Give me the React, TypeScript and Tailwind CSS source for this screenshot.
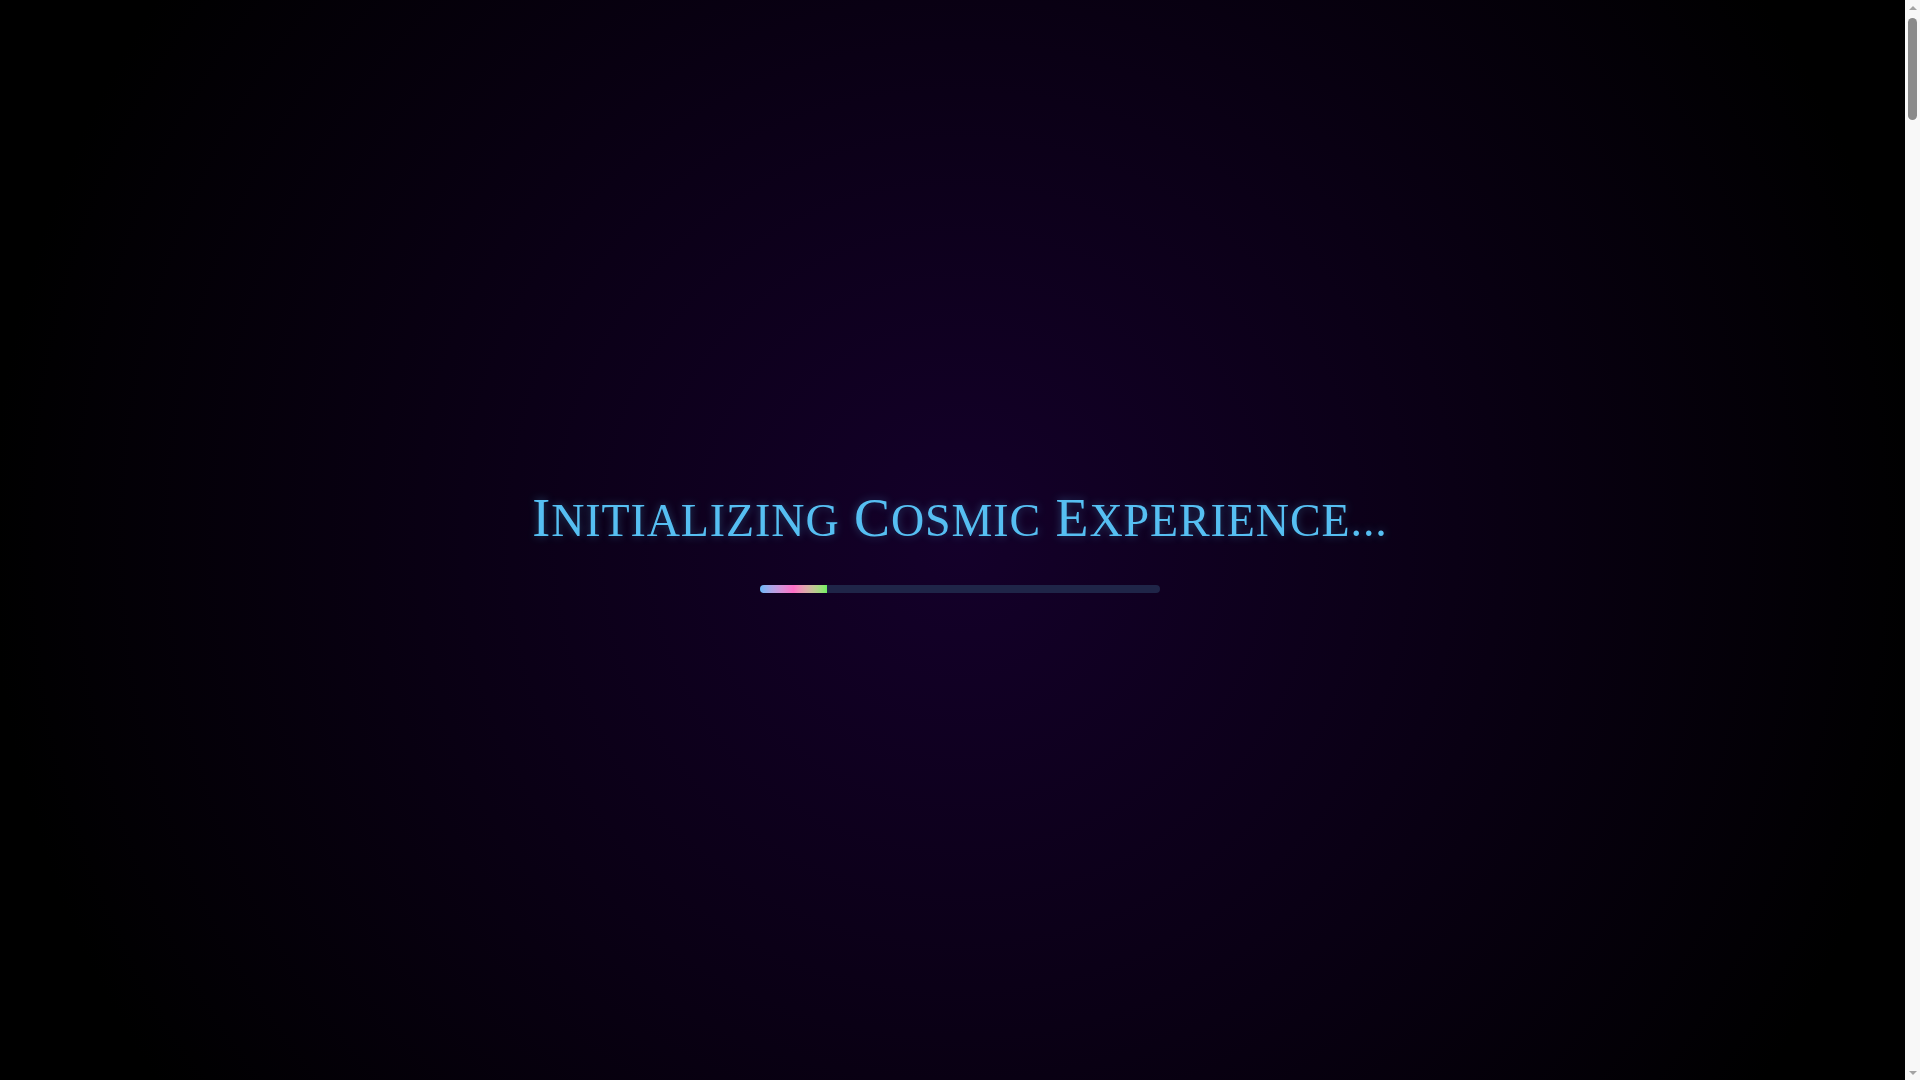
import React from "react";

export default function App() {
  return (
    <div className="relative bg-black">
      <div className="h-[11100px]" />
      <div className="fixed left-0 top-0 w-screen h-screen flex flex-col items-center justify-center bg-[radial-gradient(circle_at_center,#14002a_0%,#0a0015_45%,#000_88%)]">
        <h1
          className="pt-[4px] text-[#56bff2] font-normal leading-none tracking-[0.9px] [text-shadow:0_0_8px_rgba(79,195,247,0.35)]"
          style={{ fontFamily: '"Liberation Serif", "DejaVu Serif", serif', fontSize: 54 }}
        >
          <span>I</span>
          <span className="uppercase text-[46px]">nitializing</span>{" "}
          <span>C</span>
          <span className="uppercase text-[46px]">osmic</span>{" "}
          <span>E</span>
          <span className="uppercase text-[46px]">xperience...</span>
        </h1>
        <div className="mt-[40px] w-[400px] h-[8px] rounded-full bg-[#1f2548] overflow-hidden">
          <div className="h-full w-[67px] bg-gradient-to-r from-[#66b8f8] via-[#ff6ec7] to-[#6ff060]" />
        </div>
      </div>
      <div className="fixed right-0 top-0 w-[15px] h-screen bg-[#f8f8f8] flex flex-col items-center">
        <div className="h-[15px] flex items-center justify-center">
          <div className="w-0 h-0 border-l-[4px] border-r-[4px] border-b-[4px] border-l-transparent border-r-transparent border-b-[#a3a3a3]" />
        </div>
        <div className="mt-[3px] w-[9px] h-[102px] rounded-full bg-[#8a8a8a]" />
        <div className="flex-1" />
        <div className="h-[15px] flex items-center justify-center">
          <div className="w-0 h-0 border-l-[4px] border-r-[4px] border-t-[4px] border-l-transparent border-r-transparent border-t-[#a3a3a3]" />
        </div>
      </div>
    </div>
  );
}
